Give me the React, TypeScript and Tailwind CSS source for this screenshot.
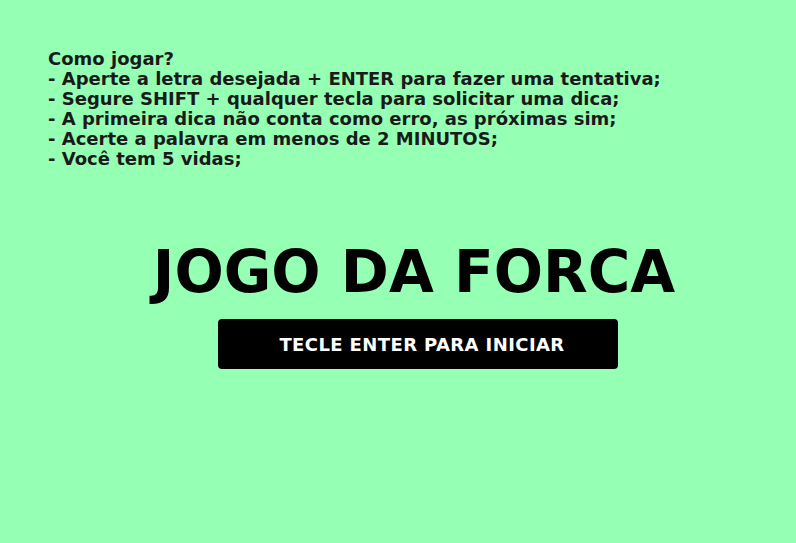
import React from "react";

const rules = [
  "- Aperte a letra desejada + ENTER para fazer uma tentativa;",
  "- Segure SHIFT + qualquer tecla para solicitar uma dica;",
  "- A primeira dica não conta como erro, as próximas sim;",
  "- Acerte a palavra em menos de 2 MINUTOS;",
  "- Você tem 5 vidas;",
];

function App() {
  return (
    <div
      className="w-[796px] h-[543px] bg-[#95ffb4] overflow-hidden"
      style={{ fontFamily: '"DejaVu Sans", "Liberation Sans", sans-serif' }}
    >
      <div className="pt-[49px] pl-[48px] text-[18px] leading-[20px] font-bold text-[#1a1a1a]">
        <p>Como jogar?</p>
        {rules.map((rule) => (
          <p key={rule}>{rule}</p>
        ))}
      </div>

      <div className="flex flex-col items-center pl-[32px] mt-[68px]">
        <h1 className="text-[58px] leading-[70px] font-bold text-black">
          JOGO DA FORCA
        </h1>
        <button
          type="button"
          className="mt-[12px] ml-[8px] w-[400px] h-[50px] rounded bg-black text-white text-[18px] font-bold tracking-[0.4px] pl-[8px]"
        >
          TECLE ENTER PARA INICIAR
        </button>
      </div>
    </div>
  );
}

export default App;
